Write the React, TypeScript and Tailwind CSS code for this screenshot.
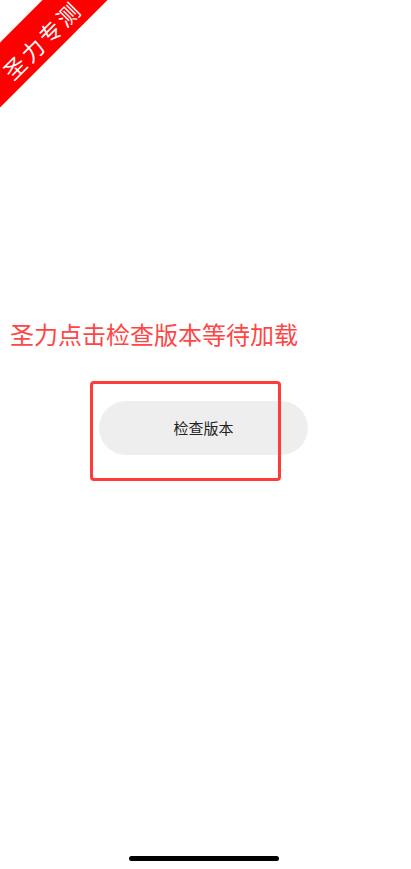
export default function App() {
  return (
    <div
      className="relative h-[869px] w-[411px] overflow-hidden bg-white flex flex-col"
      style={{ fontFamily: '"Noto Sans CJK SC", "Noto Sans", sans-serif' }}
    >
      {/* corner ribbon */}
      <div className="absolute left-[-42px] top-[14px] w-[160px] h-[46px] -rotate-45 bg-[#ff0000] flex items-center justify-center text-white text-[22px] leading-none tracking-[3px] pt-[8px] pl-[2px]">
        圣力专测
      </div>

      <div className="pt-[318px] pl-[10px] text-[24px] leading-[32px] text-[#ff4646]">
        圣力点击检查版本等待加载
      </div>

      <div className="relative mt-[31px] h-[100px]">
        <div className="absolute left-[90px] top-0 w-[191px] h-[100px] border-[3px] border-[#ff3b3b] rounded-[4px]" />
        <button className="ml-[99px] mt-[20px] w-[209px] h-[54px] rounded-full bg-[#eeeeee] flex items-center justify-center text-[15px] text-[#222222]">
          检查版本
        </button>
      </div>

      <div className="mt-auto mb-[8px] flex justify-center">
        <div className="ml-[-3px] w-[150px] h-[5px] rounded-full bg-black" />
      </div>
    </div>
  );
}
